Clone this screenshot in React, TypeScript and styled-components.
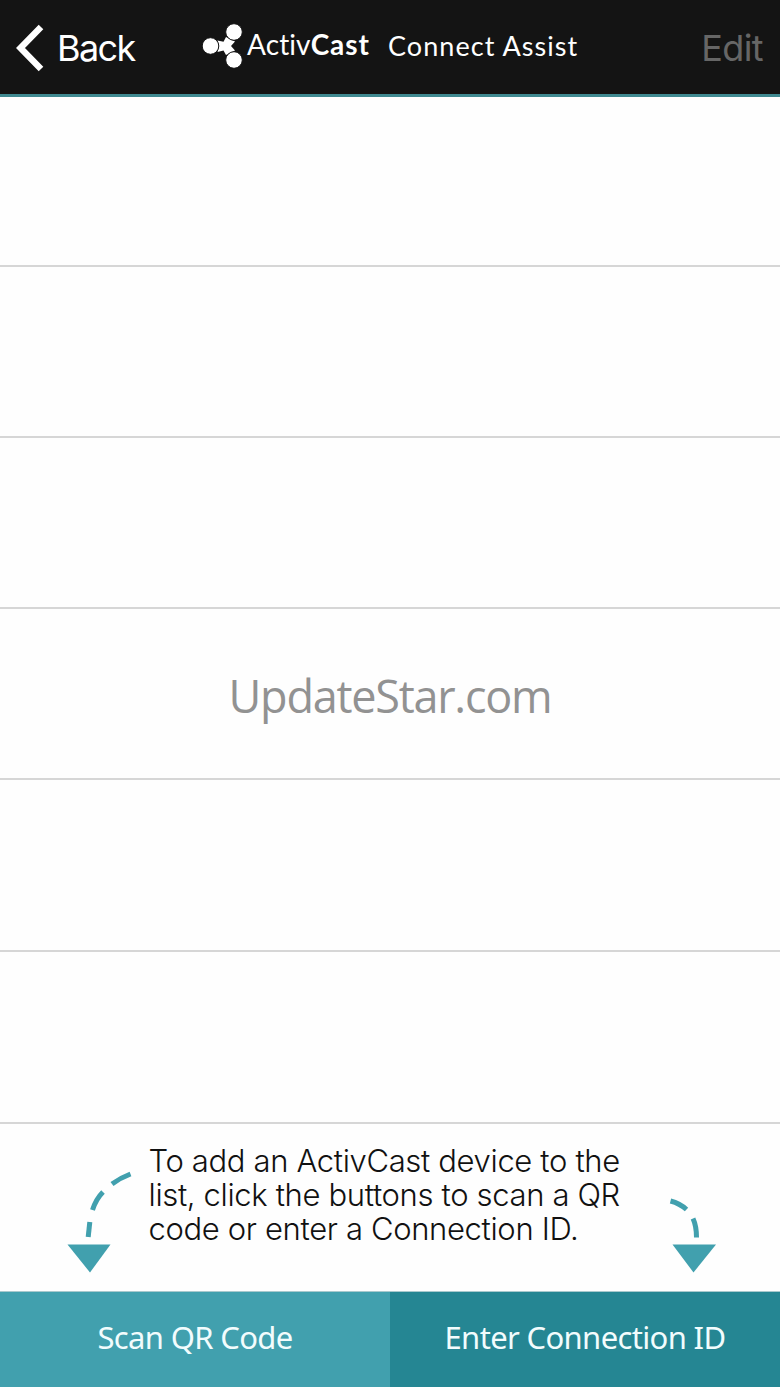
import React, { FC } from "react";
import styled, { createGlobalStyle } from "styled-components";

const rows = [170, 171, 171, 171, 172, 172];

const App: FC = () => {
  return (
    <>
      <GlobalStyle />
      <Screen>
        <Header>
          <BackButton>
            <svg width="28" height="48" viewBox="0 0 28 48">
              <path d="M25 3 L4.5 24 L25 45" fill="none" stroke="#fff" strokeWidth="6.4" />
            </svg>
            <NavLabel>Back</NavLabel>
          </BackButton>
          <Brand>
            <Logo />
            <BrandName>
              Activ<b>Cast</b>
            </BrandName>
            <BrandSub>Connect Assist</BrandSub>
          </Brand>
          <EditLabel>Edit</EditLabel>
        </Header>

        <List>
          {rows.map((height, index) => (
            <Row key={index} $height={height}>
              {index === 3 && <Watermark>UpdateStar.com</Watermark>}
            </Row>
          ))}
        </List>

        <Hint>
          <LeftArrow />
          <HintText>
            <HintLine>To add an ActivCast device to the</HintLine>
            <HintLine>list, click the buttons to scan a QR</HintLine>
            <HintLine>code or enter a Connection ID.</HintLine>
          </HintText>
          <RightArrow />
        </Hint>

        <Footer>
          <FooterButton $color="#41a0ae">Scan QR Code</FooterButton>
          <FooterButton $color="#258693">Enter Connection ID</FooterButton>
        </Footer>
      </Screen>
    </>
  );
};

const Logo: FC = () => (
  <svg width="42" height="46" viewBox="0 0 42 46">
    <path
      d="M15.5 17.5 L21.5 18.8 L24 14 L33 18.5 L29 23 L33 27.5 L24 32 L21.5 27.6 L15.5 29 L17 23 Z"
      fill="#fff"
    />
    <g fill="#fff" stroke="#141414" strokeWidth="1">
      <circle cx="8.5" cy="23" r="8.3" />
      <circle cx="32" cy="9" r="8.3" />
      <circle cx="32" cy="37" r="8.3" />
    </g>
  </svg>
);

const LeftArrow: FC = () => (
  <svg width="90" height="120" viewBox="50 1160 90 120">
    <g fill="none" stroke="#41a0ae" strokeWidth="5">
      <path d="M130.5 1174 Q120 1178 112 1184" />
      <path d="M103 1192 Q96 1199 92.5 1210" />
      <path d="M89.8 1222 L88.2 1237" />
    </g>
    <path d="M67.5 1244.5 H110.5 L90 1272.5 Z" fill="#41a0ae" />
  </svg>
);

const RightArrow: FC = () => (
  <svg width="90" height="120" viewBox="650 1160 90 120">
    <g fill="none" stroke="#41a0ae" strokeWidth="5">
      <path d="M670.5 1201 Q680 1203.5 686.5 1209.5" />
      <path d="M693 1218.5 Q696.5 1226 696.5 1237.5" />
    </g>
    <path d="M672.5 1244.5 H716 L693.5 1272.5 Z" fill="#41a0ae" />
  </svg>
);

const GlobalStyle = createGlobalStyle`
  body {
    margin: 0;
    background: #fff;
  }
  svg {
    display: block;
    flex: none;
  }
`;

const Screen = styled.div`
  width: 780px;
  height: 1387px;
  display: flex;
  flex-direction: column;
  overflow: hidden;
  background: #fefefe;
`;

const Header = styled.header`
  box-sizing: border-box;
  height: 97px;
  flex: none;
  display: flex;
  align-items: center;
  padding: 1px 17px 0 16px;
  background: #141414;
  border-bottom: 3px solid #3f8990;
  color: #fff;
  white-space: nowrap;
`;

const BackButton = styled.div`
  display: flex;
  align-items: center;
  gap: 13px;
`;

const NavLabel = styled.span`
  width: 76px;
  font: 400 36px/44px Inter, sans-serif;
  letter-spacing: -1.6px;
`;

const EditLabel = styled(NavLabel)`
  width: auto;
  margin-left: auto;
  letter-spacing: -0.6px;
  color: #666;
`;

const Brand = styled.div`
  display: flex;
  align-items: center;
  margin-left: 69px;
  padding-bottom: 3px;
`;

const BrandName = styled.span`
  width: 123px;
  margin: 0 0 4px 3px;
  font: 400 28px/34px Lato, sans-serif;
  letter-spacing: 0.1px;
  font-variant-ligatures: none;

  b {
    font-weight: 700;
    letter-spacing: 0.9px;
  }
`;

const BrandSub = styled.span`
  margin: 0 0 1px 18px;
  font: 400 27px/34px Lato, sans-serif;
  letter-spacing: 1.05px;
`;

const List = styled.div`
  flex: none;
`;

const Row = styled.div<{ $height: number }>`
  box-sizing: border-box;
  height: ${({ $height }) => $height}px;
  border-bottom: 2px solid #d6d6d6;
  display: flex;
  align-items: center;
  justify-content: center;
`;

const Watermark = styled.span`
  padding-top: 5px;
  font: 400 45px/60px "Open Sans", sans-serif;
  letter-spacing: -1.25px;
  color: #929292;
`;

const Hint = styled.div`
  height: 167px;
  flex: none;
  display: flex;
  padding: 36px 40px 0 50px;
  box-sizing: border-box;
  justify-content: space-between;
`;

const HintText = styled.div`
  width: 493px;
  margin-top: -16px;
`;

const HintLine = styled.div`
  font: 300 31px/34px Inter, sans-serif;
  letter-spacing: -0.35px;
  color: #111;
  white-space: nowrap;
`;

const Footer = styled.footer`
  flex: 1;
  display: flex;
  border-top: 1px solid #a9c9cd;
`;

const FooterButton = styled.div<{ $color: string }>`
  flex: 1;
  display: flex;
  align-items: center;
  justify-content: center;
  padding-bottom: 5px;
  background: ${({ $color }) => $color};
  color: #f2fcfd;
  font: 400 31px/40px "Noto Sans", sans-serif;
  letter-spacing: -0.65px;
`;

export default App;
